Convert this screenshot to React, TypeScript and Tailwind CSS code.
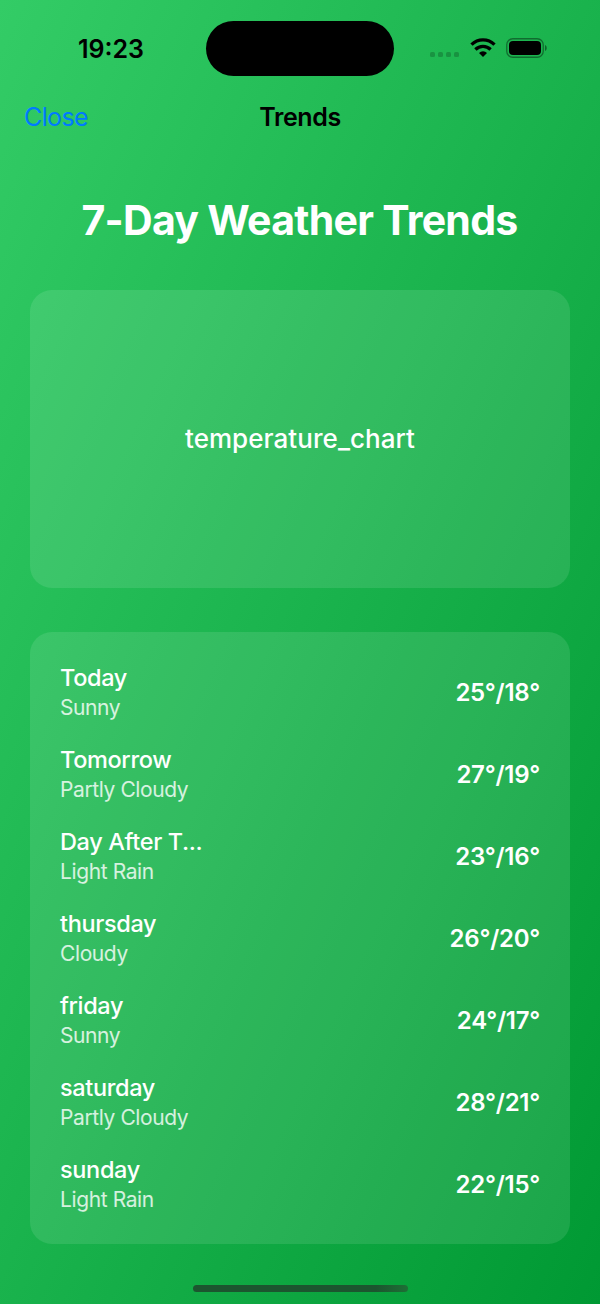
const forecast = [
  { day: "Today", condition: "Sunny", temps: "25°/18°" },
  { day: "Tomorrow", condition: "Partly Cloudy", temps: "27°/19°" },
  { day: "Day After T...", condition: "Light Rain", temps: "23°/16°" },
  { day: "thursday", condition: "Cloudy", temps: "26°/20°" },
  { day: "friday", condition: "Sunny", temps: "24°/17°" },
  { day: "saturday", condition: "Partly Cloudy", temps: "28°/21°" },
  { day: "sunday", condition: "Light Rain", temps: "22°/15°" },
];

function WifiIcon() {
  return (
    <svg width="26" height="20" viewBox="0 0 26 20" fill="none" stroke="black" strokeWidth="3.3">
      <path d="M1.5 6.6 A16.4 16.4 0 0 1 24.5 6.6" />
      <path d="M5.4 11.5 A10.8 10.8 0 0 1 20.6 11.5" />
      <path d="M13 19 L9 15 A5.6 5.6 0 0 1 17 15 Z" fill="black" stroke="none" />
    </svg>
  );
}

function BatteryIcon() {
  return (
    <svg width="41" height="20" viewBox="0 0 41 20">
      <rect x="0.75" y="0.75" width="36.5" height="18.5" rx="6" fill="none" stroke="black" strokeOpacity="0.4" strokeWidth="1.3" />
      <rect x="3" y="3" width="32" height="14" rx="4" fill="black" />
      <path d="M39 7 C41.3 8 41.3 12 39 13 Z" fill="black" fillOpacity="0.45" />
    </svg>
  );
}

function StatusBar() {
  return (
    <div className="flex h-[96px] items-center">
      <div className="w-[206px] pl-[78px] pt-px">
        <span className="text-[25px] font-semibold leading-8 text-black">19:23</span>
      </div>
      <div className="h-[55px] w-[188px] rounded-full bg-black" />
      <div className="flex items-center pl-[36px]">
        <div className="mt-[13px] flex gap-[3px]">
          {[0, 1, 2, 3].map((i) => (
            <span key={i} className="h-[5px] w-[5px] rounded-[1.5px] bg-black/20" />
          ))}
        </div>
        <div className="ml-[11px]"><WifiIcon /></div>
        <div className="ml-[10px]"><BatteryIcon /></div>
      </div>
    </div>
  );
}

export default function App() {
  return (
    <div className="flex h-[1304px] w-[600px] flex-col overflow-hidden bg-linear-[to_bottom_right,#33cc66,#009933] font-['Inter','Liberation_Sans',sans-serif] text-white">
      <StatusBar />

      <div className="grid h-[42px] grid-cols-3 items-center px-[24px]">
        <button className="text-left text-[25px] leading-8 tracking-[-0.6px] text-[#007aff]">Close</button>
        <h2 className="text-center text-[25px] font-semibold leading-8 tracking-[-0.4px] text-black">Trends</h2>
      </div>

      <h1 className="mt-[57px] pr-px text-center text-[41px] font-bold leading-[50px] tracking-[-0.7px]">
        7-Day Weather Trends
      </h1>

      <div className="mx-[30px] mt-[45px] flex h-[298px] items-center justify-center rounded-[22px] bg-white/10">
        <span className="text-[26px] font-medium leading-8 tracking-[0.05px]">temperature_chart</span>
      </div>

      <div className="mx-[30px] mt-[44px] flex h-[612px] flex-col gap-[22px] rounded-[22px] bg-white/10 px-[30px] pt-[31px]">
        {forecast.map((item) => (
          <div key={item.day} className="flex h-[60px] items-center justify-between">
            <div className="w-[149px]">
              <p className="whitespace-nowrap text-[23.5px] font-medium leading-[30px] tracking-[-0.35px]">{item.day}</p>
              <p className="whitespace-nowrap text-[21px] leading-[30px] tracking-[-0.4px] text-white/80">{item.condition}</p>
            </div>
            <span className="text-[24px] font-semibold leading-[30px] tracking-[-0.25px]">{item.temps}</span>
          </div>
        ))}
      </div>

      <div className="mx-auto mt-[41px] h-[7px] w-[215px] rounded-full bg-linear-to-r from-[#1c552f] from-85% to-[#1d7035]" />
    </div>
  );
}
